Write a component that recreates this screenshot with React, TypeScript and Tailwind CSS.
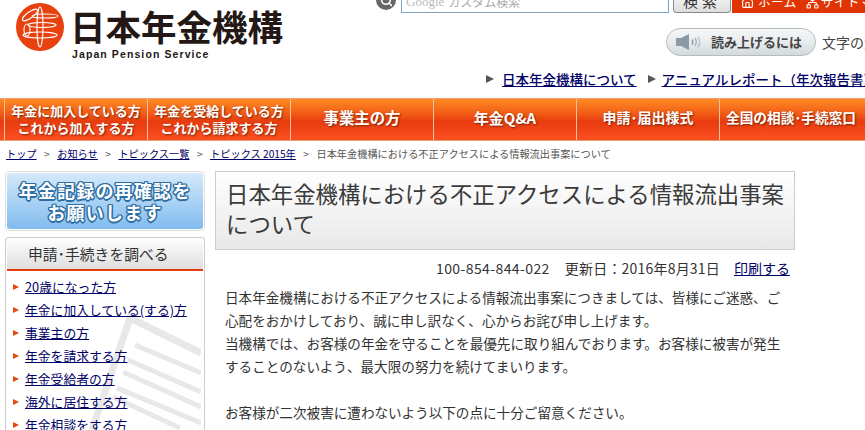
import React from 'react';
import { Home, Network, Search } from 'lucide-react';

const FONT = 'font-["Noto_Sans_CJK_JP","Noto_Sans",sans-serif]';

const navItems = [
  { lines: ['年金に加入している方', 'これから加入する方'], size: 'text-[13px]' },
  { lines: ['年金を受給している方', 'これから請求する方'], size: 'text-[13px]' },
  { lines: ['事業主の方'], size: 'text-[15.4px]' },
  { lines: ['年金Q&A'], size: 'text-[15px]' },
  { lines: ['申請･届出様式'], size: 'text-[14px]' },
  { lines: ['全国の相談･手続窓口'], size: 'text-[13.7px]' },
];

const sideLinks = [
  '20歳になった方',
  '年金に加入している(する)方',
  '事業主の方',
  '年金を請求する方',
  '年金受給者の方',
  '海外に居住する方',
  '年金相談をする方',
];

const crumbs = ['トップ', 'お知らせ', 'トピックス一覧', 'トピックス 2015年'];

const Logo = () => (
  <svg width="50" height="50" viewBox="0 0 50 50" className="shrink-0">
    <circle cx="25" cy="24" r="24" fill="#e8400f" />
    <g fill="none" stroke="#fff" strokeWidth="1.1">
      <ellipse cx="15" cy="12" rx="9" ry="3" transform="rotate(-35 15 12)" />
      <ellipse cx="30" cy="13" rx="13" ry="2" />
      <ellipse cx="27" cy="22" rx="14" ry="2.5" />
      <ellipse cx="25" cy="32" rx="17" ry="3" />
      <ellipse cx="25" cy="24" rx="3" ry="20" />
      <ellipse cx="12" cy="27" rx="3" ry="6" />
    </g>
  </svg>
);

const Speaker = () => (
  <svg width="28" height="16" viewBox="0 0 28 16" className="shrink-0">
    <path d="M0 4h5l8-4v16l-8-4H0z" fill="#8a9ba6" />
    <g fill="none" stroke="#8a9ba6" strokeWidth="1.4">
      <path d="M16 5.5c1 1.5 1 3.5 0 5" />
      <path d="M19 4c1.6 2.5 1.6 5.500 0 8" opacity="0.75" />
      <path d="M22 2.500c2.200 3.500 2.200 7.500 0 11" opacity="0.5" />
    </g>
  </svg>
);

const Header = () => (
  <div className="flex h-[98px] justify-between overflow-hidden">
    <div className="flex items-start gap-[7px] pl-[15px] pt-[3px]">
      <Logo />
      <div>
        <div className="-ml-[2px] text-[35.5px] leading-[46px] font-bold text-[#231815] whitespace-nowrap">日本年金機構</div>
        <div className="-mt-[1px] text-[10.5px] leading-[12px] font-bold tracking-[1.1px] text-[#231815] font-['Liberation_Sans',sans-serif] whitespace-nowrap">
          Japan Pension Service
        </div>
      </div>
    </div>
    <div className="flex w-[489px] flex-col">
      <div className="flex h-[13px] items-end overflow-hidden">
        <div className="mb-[3px] flex h-5 w-5 shrink-0 items-center justify-center rounded-full bg-[#666]">
          <Search size={13} color="#fff" strokeWidth={3} />
        </div>
        <div className="ml-[5px] flex h-[22px] w-[268px] shrink-0 items-center border border-[#7ba3c4] bg-white pl-1 text-[12px] text-[#aaa] whitespace-nowrap">
          <span className="font-['Liberation_Serif',serif] text-[13px] text-[#bbb]">Google</span>
          <span className="ml-1">カスタム検索</span>
        </div>
        <div className="ml-[4px] flex h-6 w-[58px] shrink-0 items-center justify-center rounded-[3px] border border-[#888] bg-gradient-to-b from-white to-[#ddd] text-[15px] tracking-[4px] text-[#333]">
          検索
        </div>
        <div className="ml-[1px] flex h-[22px] flex-1 items-center bg-[#e03503] pl-[9px] text-[12.500px] tracking-[0.5px] text-white whitespace-nowrap">
          <Home size={13} />
          <span className="ml-[4px]">ホーム</span>
          <Network size={13} className="ml-[9px]" />
          <span className="ml-[2px]">サイトマップ</span>
        </div>
      </div>
      <div className="mt-[15px] flex h-[28px] items-center whitespace-nowrap">
        <div className="ml-[290px] flex h-[28px] w-[150px] shrink-0 items-center rounded-[14px] border border-[#b5bdc2] bg-gradient-to-b from-[#f5f7f8] via-[#e8ecee] to-[#d3d9dc] pl-[9px]">
          <Speaker />
          <span className="ml-[7px] text-[13px] font-bold text-[#444]">読み上げるには</span>
        </div>
        <span className="ml-[6px] text-[14px] text-[#444]">文字の大きさ</span>
      </div>
      <div className="mt-[13px] flex h-[20px] items-center text-[13.5px] font-medium whitespace-nowrap">
        <span className="ml-[110px] h-0 w-0 border-y-[4.5px] border-l-[8px] border-y-transparent border-l-[#555]" />
        <a className="ml-[8px] text-[#000066] underline">日本年金機構について</a>
        <span className="ml-[11px] h-0 w-0 border-y-[4.5px] border-l-[8px] border-y-transparent border-l-[#555]" />
        <a className="ml-[6px] text-[#000066] underline">{'アニュアルレポート\uFF08年次報告書\uFF09'}</a>
      </div>
    </div>
  </div>
);

const Nav = () => (
  <div className="flex h-[43px] overflow-hidden border-y border-[#e8a070] bg-gradient-to-b from-[#ff8a24] via-[#e83c0e] via-55% to-[#ff4f20] pl-1">
    {navItems.map(({ lines, size }, i) => (
      <div
        key={i}
        className={`flex w-[143px] shrink-0 flex-col items-center justify-center border-l border-[#f2c2a4] font-bold text-white [text-shadow:1px_1px_2px_#7a2400] ${size} ${lines.length > 1 ? 'pb-[2px]' : 'pb-[4px]'}`}
      >
        {lines.map((line) => (
          <div key={line} className="leading-[17px] whitespace-nowrap">
            {line}
          </div>
        ))}
      </div>
    ))}
  </div>
);

const Breadcrumb = () => (
  <div className="flex h-[28px] items-center gap-[7.5px] pb-[3px] pl-[6px] text-[10.2px] whitespace-nowrap text-[#555]">
    {crumbs.map((c) => (
      <React.Fragment key={c}>
        <a className="text-[#000066] underline">{c}</a>
        <span>&gt;</span>
      </React.Fragment>
    ))}
    <span>日本年金機構における不正アクセスによる情報流出事案について</span>
  </div>
);

const Sidebar = () => (
  <div className="flex w-[200px] shrink-0 flex-col gap-[6px]">
    <div className="rounded-[4px] border border-[#ddd] p-[1px]">
      <div className="flex h-[56px] flex-col items-center justify-center rounded-[3px] bg-gradient-to-b from-[#d5e9fa] to-[#80bcee] text-[18px] leading-[22px] font-bold tracking-[1.2px] text-white [text-shadow:1.5px_0_0_#2c6da3,-1.5px_0_0_#2c6da3,0_1.5px_0_#2c6da3,0_-1.5px_0_#2c6da3,1px_1px_0_#2c6da3,-1px_-1px_0_#2c6da3,1px_-1px_0_#2c6da3,-1px_1px_0_#2c6da3]">
        <div>年金記録の再確認を</div>
        <div>お願いします</div>
      </div>
    </div>
    <div className="relative h-[220px] overflow-hidden rounded-t-[4px] border-x border-t border-[#ccc] bg-white px-[1px]">
      <svg viewBox="0 0 121 120" className="absolute left-[74px] top-[72px] h-[120px] w-[121px]">
        <g fill="none" stroke="#e8e8e8">
          <path d="M12 120 L50 8 L121 43" strokeWidth="7" />
          <path d="M55 35 L121 63 M48 50 L121 82 M43 62 L121 97 M37 78 L121 113 M33 87 L100 118" strokeWidth="5" />
        </g>
      </svg>
      <div className="relative flex h-[33px] items-center border-b-[2px] border-[#e83c0e] bg-gradient-to-b from-white to-[#dedede] pl-[21px] pt-[1px] text-[14.800px] text-[#333]">
        申請･手続きを調べる
      </div>
      <ul className="relative pt-[4px]">
        {sideLinks.map((t) => (
          <li key={t} className="flex h-[23px] items-center pl-[6px] text-[12.800px] whitespace-nowrap">
            <span className="h-0 w-0 border-y-[3.5px] border-l-[6px] border-y-transparent border-l-[#e8470f]" />
            <a className="ml-[6px] text-[#000066] underline">{t}</a>
          </li>
        ))}
      </ul>
    </div>
  </div>
);

const Main = () => (
  <div className="ml-[10px] w-[580px] shrink-0">
    <h1 className="h-[79px] border border-[#ccc] bg-gradient-to-b from-white to-[#e8e8e8] px-[10px] pt-[6px] text-[22.400px] leading-[30px] font-normal text-[#3a3a3a]">
      日本年金機構における不正アクセスによる情報流出事案について
    </h1>
    <div className="mt-[8px] flex h-[21px] items-center justify-end pr-[5px] text-[14px] whitespace-nowrap text-[#333]">
      <span className="tracking-[0.4px]">100-854-844-022</span>
      <span className="ml-[15px] tracking-[0.2px]">{'更新日\uFF1A2016年8月31日'}</span>
      <a className="ml-[14px] text-[#000066] underline">印刷する</a>
    </div>
    <div className="mt-[7px] w-[570px] pl-[10px] text-[13.600px] leading-[23px] text-[#333]">
      <p>
        日本年金機構における不正アクセスによる情報流出事案につきましては、皆様にご迷惑、ご心配をおかけしており、誠に申し訳なく、心からお詫び申し上げます。
      </p>
      <p>
        当機構では、お客様の年金を守ることを最優先に取り組んでおります。お客様に被害が発生することのないよう、最大限の努力を続けてまいります。
      </p>
      <p className="mt-[23px]">お客様が二次被害に遭わないよう以下の点に十分ご留意ください。</p>
    </div>
  </div>
);

const App: React.FC = () => (
  <div className={`h-[430px] w-[865px] overflow-hidden bg-white ${FONT}`}>
    <Header />
    <Nav />
    <Breadcrumb />
    <div className="mt-[2px] flex pl-[5px]">
      <Sidebar />
      <Main />
    </div>
  </div>
);

export default App;
